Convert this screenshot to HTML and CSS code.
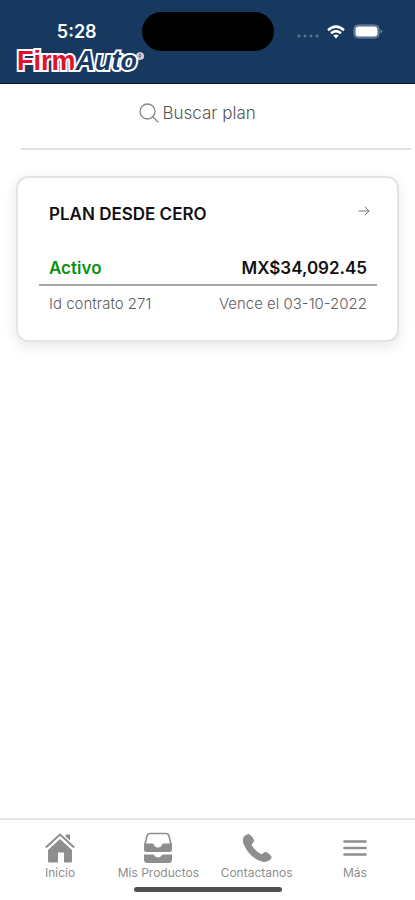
FILE: index.html
```html
<!DOCTYPE html>
<html lang="es">
<head>
<meta charset="utf-8">
<meta name="viewport" content="width=device-width, initial-scale=1">
<title>FirmAuto</title>
<link rel="stylesheet" href="styles.css">
</head>
<body>
<header class="header">
  <div class="status">
    <time class="clock">5:28</time>
    <div class="island"></div>
    <div class="signals">
      <svg width="22" height="4" viewBox="0 0 22 4" fill="#5a7391" aria-hidden="true"><circle cx="2" cy="2" r="1.500"/><circle cx="8" cy="2" r="1.500"/><circle cx="14" cy="2" r="1.500"/><circle cx="20" cy="2" r="1.500"/></svg>
      <svg class="wifi" width="18" height="14" viewBox="0 0 18 14" fill="none" stroke="#fff" stroke-width="2.5" aria-hidden="true"><path d="M1 5.2Q9-2 17 5.2M4 8.3Q9 4 14 8.3"/><path d="M6.2 10.6Q9 8.4 11.8 10.6L9 13.6Z" fill="#fff" stroke="none"/></svg>
      <svg width="30" height="16" viewBox="0 0 30 16" aria-hidden="true"><rect x="1" y="1" width="25" height="13" rx="4" fill="#476182" stroke="#7489a4"/><rect x="2.500" y="2.500" width="22" height="10" rx="3" fill="#fff"/><path d="M27.500 5.500Q31 7.500 27.500 9.500Z" fill="#7489a4"/></svg>
    </div>
  </div>
  <div class="logo"><span class="firm">Firm</span><span class="auto">Auto</span><span class="mark">®</span></div>
</header>
<main class="content">
  <label class="search">
    <svg width="20" height="20" viewBox="0 0 20 20" fill="none" stroke="#8a8a8a" stroke-width="1.3" stroke-linecap="round" aria-hidden="true"><circle cx="8.500" cy="8.500" r="7.500"/><path d="M14 14l5 5"/></svg>
    <input class="search-input" type="text" placeholder="Buscar plan" aria-label="Buscar plan">
  </label>
  <a class="card" href="#plan">
    <div class="row title-row">
      <h1 class="title">PLAN DESDE CERO</h1>
      <svg class="arrow" width="12" height="12" viewBox="0 0 12 12" fill="none" stroke="#777" stroke-linecap="round" stroke-linejoin="round" aria-hidden="true"><path d="M1 6h10M7 2l4 4-4 4"/></svg>
    </div>
    <div class="row amount-row"><span class="state">Activo</span><span class="amount">MX$34,092.45</span></div>
    <div class="row detail-row"><span>Id contrato 271</span><span>Vence el 03-10-2022</span></div>
  </a>
</main>
<nav class="nav">
  <div class="tabs">
    <a class="tab" href="#inicio">
      <svg width="32" height="32" viewBox="0 0 32 32" fill="#8e8e8e" aria-hidden="true"><path d="M21.500 2.500h4.500v9l-4.500-4z"/><path d="M16 7L28 18v11q0 1.500-1.500 1.500H20V20.500h-6v10H5.500Q4 30.500 4 29V18z"/><path d="M1.800 15.500L16 2.500l14.200 13" fill="none" stroke="#fff" stroke-width="4.500"/><path d="M1.800 15.500L16 2.500l14.200 13" fill="none" stroke="#8e8e8e" stroke-width="2"/></svg>
      <span>Inicio</span>
    </a>
    <a class="tab" href="#productos">
      <svg width="32" height="32" viewBox="0 0 32 32" fill="#8e8e8e" aria-hidden="true"><path d="M3 12L5 4Q5.700 1.500 8 1.500h16q2.300 0 3 2.500L29 12" fill="none" stroke="#8e8e8e" stroke-width="1.600"/><path d="M2 11.500h8.500q1 0 1.400 1Q13 15.500 16 15.500t4.100-3q.4-1 1.400-1H30v6q0 2.500-2.500 2.500h-23Q2 20 2 17.500zM2 22.500h9q1 0 1.500 1Q13.500 25.500 16 25.500t3.500-2q.5-1 1.500-1h9v5q0 3.500-3.500 3.500h-21Q2 31 2 27.500z"/></svg>
      <span>Mis Productos</span>
    </a>
    <a class="tab" href="#contacto">
      <svg width="32" height="32" viewBox="0 0 32 32" fill="#8e8e8e" aria-hidden="true"><path d="M3 4.500Q6 1.500 8 2q3 2 5 6 .5 1.700-1 2.700-2 1.300-.8 3.300 3.300 5 8 7.800 2 1.200 3.300-.7 1.200-1.600 2.800-1.100 3.400 1.800 5 4.200.8 1.300-.7 3-3.500 3.800-8.100 2.600Q9 26.500 2.500 12 1 7.500 3 4.500z"/></svg>
      <span>Contactanos</span>
    </a>
    <a class="tab" href="#mas">
      <svg width="32" height="32" viewBox="0 0 32 32" fill="none" stroke="#8e8e8e" stroke-width="2.600" stroke-linecap="round" aria-hidden="true"><path d="M5.500 9.500h21M5.500 16h21M5.500 22.500h21"/></svg>
      <span>Más</span>
    </a>
  </div>
  <div class="home-bar"></div>
</nav>
</body>
</html>
```
FILE: styles.css
```css
* { box-sizing: border-box; }
body {
  margin: 0;
  min-height: 100vh;
  display: flex;
  flex-direction: column;
  background: #fff;
  color: #111;
  font-family: Inter, "Liberation Sans", sans-serif;
}
a { color: inherit; text-decoration: none; }
svg { display: block; flex: none; }

.header {
  background: #18395f;
  border-bottom: 1px solid #08103a;
  padding: 12px 0 8px;
}
.status {
  display: grid;
  grid-template-columns: 1fr 132px 1fr;
  align-items: center;
}
.clock {
  justify-self: center;
  padding-left: 12px;
  color: #fff;
  font-size: 18px;
  font-weight: 600;
  line-height: 20px;
}
.island {
  height: 39px;
  border-radius: 20px;
  background: #000;
}
.signals {
  display: flex;
  align-items: center;
  justify-content: center;
  gap: 8px;
  padding-right: 8px;
}
.signals svg:first-child { margin-top: 8px; }
.logo {
  display: flex;
  width: max-content;
  margin: -4px 0 0 17px;
  font-family: "Liberation Sans", sans-serif;
  font-size: 27px;
  font-weight: 700;
  line-height: 28px;
  -webkit-text-stroke: 4px #fff;
  paint-order: stroke fill;
}
.firm { color: #e2102c; }
.auto { color: #173a68; font-style: italic; }
.mark {
  color: #173a68;
  font-size: 8px;
  line-height: 20px;
  -webkit-text-stroke: 2px #fff;
}

.content { flex: 1; }
.search {
  display: flex;
  align-items: center;
  justify-content: center;
  gap: 4px;
  height: 66px;
  margin: 0 4px 0 21px;
  padding: 0 33px 6px 0;
  border-bottom: 2px solid #e2e2e2;
}
.search-input {
  width: 98px;
  padding: 0;
  border: 0;
  outline: 0;
  background: none;
  color: #555;
  font-family: inherit;
  font-size: 17px;
  font-weight: 300;
  line-height: 24px;
}
.search-input::placeholder { color: #555; opacity: 1; }

.card {
  display: block;
  margin: 26px 16px 0;
  padding: 24px 20px 25px 21px;
  border: 2px solid #e4e4e4;
  border-radius: 12px;
  background: #fff;
  box-shadow: 0 4px 14px rgba(0, 0, 0, .1);
}
.row {
  display: flex;
  justify-content: space-between;
  padding: 0 10px;
}
.title-row { padding-right: 7px; }
.title {
  margin: 0;
  font-size: 17px;
  font-weight: 600;
  line-height: 24px;
}
.arrow { margin-top: 3px; }
.amount-row {
  margin-top: 30px;
  padding-bottom: 4px;
  border-bottom: 2px solid #a5a8a9;
  font-size: 17px;
  font-weight: 600;
  line-height: 24px;
}
.state { color: #0c900c; }
.detail-row {
  padding-top: 7px;
  color: #606060;
  font-size: 15px;
  font-weight: 300;
  line-height: 22px;
}

.nav {
  border-top: 2px solid #e6e6e6;
  padding: 12px 11px 8px;
}
.tabs {
  display: grid;
  grid-template-columns: repeat(4, 1fr);
}
.tab {
  display: flex;
  flex-direction: column;
  align-items: center;
  color: #8e8e8e;
  font-size: 12px;
  line-height: 16px;
  gap: 1px;
}
.home-bar {
  width: 148px;
  height: 5px;
  margin: 6px auto 0;
  border-radius: 3px;
  background: #505050;
}
```
